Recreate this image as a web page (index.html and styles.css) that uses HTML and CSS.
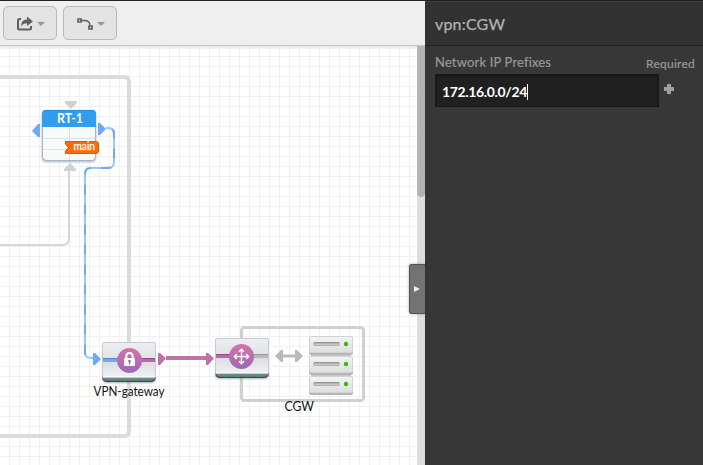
FILE: index.html
```html
<!DOCTYPE html>
<html lang="en">
<head>
<meta charset="utf-8">
<title>Network editor</title>
<link rel="stylesheet" href="styles.css">
</head>
<body>
<div class="app">
  <main class="workspace">
    <header class="toolbar">
      <button class="tool" aria-label="Export">
        <svg width="18" height="16" viewBox="0 0 18 16"><path d="M5 3H3.500Q2 3 2 4.500V12Q2 13.500 3.500 13.500H13.500Q15 13.500 15 12V10" fill="none" stroke="#606060" stroke-width="2"/><path d="M5 10.500Q5 3.500 11 3.500V0.500L17 5.500L11 10V7.200Q7.500 7 5 10.500Z" fill="#606060"/></svg>
        <span class="caret"></span>
      </button>
      <button class="tool" aria-label="Line style">
        <svg width="18" height="14" viewBox="0 0 18 14"><path d="M5 3.500H8Q14 3.500 14 8.500" fill="none" stroke="#606060" stroke-width="1.300"/><path d="M2 2h3v3h-3zM13 9h3v3h-3z" fill="none" stroke="#606060" stroke-width="1.700"/></svg>
        <span class="caret"></span>
      </button>
    </header>
    <section class="canvas">
      <svg class="diagram" width="425" height="419" viewBox="0 46 425 419">
        <defs>
          <linearGradient id="box" x2="0" y2="1"><stop offset="0" stop-color="#eceef2"/><stop offset=".6" stop-color="#dddfe3"/><stop offset="1" stop-color="#f0f1f3"/></linearGradient>
          <linearGradient id="disc" x2="0" y2="1"><stop offset="0" stop-color="#d673a8"/><stop offset="1" stop-color="#9c68b7"/></linearGradient>
          <linearGradient id="rack" x2="0" y2="1"><stop offset="0" stop-color="#f4f4f4"/><stop offset="1" stop-color="#dedede"/></linearGradient>
          <linearGradient id="base" x2="0" y2="1"><stop offset="0" stop-color="#8e9298"/><stop offset="1" stop-color="#5e646b"/></linearGradient>
          <filter id="shadow" x="-20%" y="-20%" width="140%" height="150%"><feDropShadow dx="0" dy="1" stdDeviation="1" flood-color="#667085" flood-opacity=".55"/></filter>
          <g id="gateway">
            <path d="M0 35H54V36Q53 40 49 40H5Q1 40 0 36Z" fill="url(#base)" filter="url(#shadow)"/>
            <path d="M1 37Q2 39.500 5 39.500H49Q52 39.500 53 37" fill="none" stroke="#3f464e"/>
            <path d="M8 38.500H47" stroke="#27a45f" stroke-dasharray="5 6"/>
            <rect x=".5" y=".5" width="53" height="35" rx="1.500" fill="url(#box)" stroke="#c5cad5"/>
            <path d="M1 34.500H53" stroke="#f8f8f8"/>
          </g>
          <g id="server">
            <path d="M0 14H44V17Q44 19 42 19H2Q0 19 0 17Z" fill="#b6b6b6"/>
            <rect x=".5" y=".5" width="43" height="16" rx="1.500" fill="url(#rack)" stroke="#d2d2d2"/>
            <rect x="4" y="6" width="27" height="4" rx="2" fill="#b2b2b2"/>
            <path d="M5 6.500H30" stroke="#969696"/><path d="M5 8.500H30" stroke="#c8c8c8"/>
            <circle cx="37" cy="8" r="2.200" fill="#39bd08"/>
          </g>
        </defs>
        <path d="M-5 77H124Q129 77 129 82V431Q129 436 124 436H-5" fill="none" stroke="#dbdbdb" stroke-width="4"/>
        <rect x="241.500" y="327.500" width="122" height="73" rx="3" fill="none" stroke="#d0d0d0" stroke-width="3"/>

        <path d="M0 245H62Q69 245 69 238V169" fill="none" stroke="#d6d6d5" stroke-width="2"/>
        <path d="M70 163L76 169V171H64V169Z" fill="#d1d1cf"/>
        <path d="M65 101H77V103L71 109L65 103Z" fill="#d1d1cf"/>
        <g fill="none" stroke-width="2">
          <path d="M106 128H108Q114 128 114 134V162Q114 168 108 168H91Q85 168 85 174V352Q85 358 91 358H95" stroke="#9dc7fc"/>
          <path d="M106 128H108Q114 128 114 134V162Q114 168 108 168H91Q85 168 85 174V352Q85 358 91 358H95" stroke="#6babfb" stroke-dasharray="10 10" stroke-dashoffset="13.900"/>
        </g>
        <path d="M40 124V137H38L32 131L38 124ZM98 123H100L106 129L100 135H98ZM93 353H95L101 359L95 365H93Z" fill="#69abfa"/>

        <g filter="url(#shadow)"><rect x="42" y="110" width="54" height="51" rx="4" fill="#b8c1d2"/></g>
        <rect x="42.500" y="110.500" width="53" height="50" rx="4" fill="#f8faf9" stroke="#a8b4c8"/>
        <path d="M69.500 127V160M43 138.500H95M43 149.500H95" stroke="#dfe2e4"/>
        <path d="M42 127V114Q42 110 46 110H92Q96 110 96 114V127Z" fill="#309df1"/>
        <path d="M44 111.500Q45 110.500 47 110.500H91Q93 110.500 94 111.500" fill="none" stroke="#278bd9"/>
        <text class="node-title" x="70" y="123" text-anchor="middle" textLength="26" lengthAdjust="spacingAndGlyphs">RT-1</text>
        <path d="M65.500 141.500H96Q98.500 141.500 98.500 144V151Q98.500 153.500 96 153.500H65.500V151L68.500 147.500L65.500 144Z" fill="#fd6c08" stroke="#dc5a00"/>
        <text class="tag" x="73.500" y="150.300" textLength="21.500" lengthAdjust="spacingAndGlyphs">main</text>

        <path d="M166 358H207" stroke="#bd73a3" stroke-width="4"/>
        <path d="M158 353H160L166 358.500L160 365H158ZM206 353H208L214 358.500L208 365H206Z" fill="#bd73a3"/>
        <use href="#gateway" x="102" y="342"/>
        <path d="M103 360H118" stroke="#69abfa" stroke-width="4"/><path d="M103 358.500H118" stroke="#568ad0"/>
        <path d="M141 360H155" stroke="#bb65aa" stroke-width="4"/><path d="M141 358.500H155" stroke="#934c89"/>
        <circle cx="129.500" cy="360.500" r="12.500" fill="url(#disc)"/>
        <path d="M126.300 359V356.500Q126.300 353 129.500 353Q132.700 353 132.700 356.500V359" fill="none" stroke="#fff" stroke-width="2"/>
        <rect x="124" y="358" width="11" height="8" rx="1" fill="#fff"/><circle cx="129.500" cy="361" r="1.300" fill="#a9659f"/><path d="M129.500 361V364.500" stroke="#a9659f" stroke-width="1.300"/>
        <text class="label" x="93.500" y="396" textLength="71" lengthAdjust="spacingAndGlyphs">VPN-gateway</text>

        <use href="#gateway" x="215" y="338"/>
        <path d="M216 356H230" stroke="#bb65aa" stroke-width="4"/><path d="M216 354.500H230" stroke="#934c89"/>
        <path d="M253 356H268" stroke="#b8b8ba" stroke-width="4"/><path d="M253 354.500H268" stroke="#98999b"/>
        <circle cx="241.500" cy="356.500" r="12.500" fill="url(#disc)"/>
        <path d="M241.500 350V363M235 356.500H248M239 351.800L241.500 349.300L244 351.800M239 361.200L241.500 363.700L244 361.200M236.800 354L234.300 356.500L236.800 359M246.200 354L248.700 356.500L246.200 359" fill="none" stroke="#fff" stroke-width="1.400"/>
        <path d="M275 356L281 350H283V354.500H295V350H297L303 356L297 362H295V357.500H283V362H281Z" fill="#b9b9bc"/>
        <path d="M311 353H351V377H311Z" fill="#c8c8c8"/>
        <use href="#server" x="309" y="336"/><use href="#server" x="309" y="356"/><use href="#server" x="309" y="376"/>
        <text class="label" x="284.500" y="411" textLength="29.500" lengthAdjust="spacingAndGlyphs">CGW</text>
      </svg>
      <div class="scrollbar"><div class="thumb"></div></div>
      <button class="collapse" aria-label="Collapse panel"></button>
    </section>
  </main>
  <aside class="panel">
    <h1 class="panel-title">vpn:CGW</h1>
    <div class="panel-body">
      <div class="field-head"><span class="field-name">Network IP Prefixes</span><span class="required">Required</span></div>
      <div class="field-row"><div class="input"><span class="value">172.16.0.0/24</span></div><svg class="add" width="10" height="10"><path d="M3 0h4v3h3v4h-3v3h-4v-3h-3v-4h3z" fill="#a0a0a0"/></svg></div>
    </div>
  </aside>
</div>
</body>
</html>
```
FILE: styles.css
```css
* { box-sizing: border-box; }
body { margin: 0; font-family: Lato, "Liberation Sans", sans-serif; overflow: hidden; }
.app { display: flex; width: 703px; height: 465px; border-top: 1px solid #2b1a29; }
.workspace { width: 425px; display: flex; flex-direction: column; }
.toolbar { height: 45px; padding: 5px 3px; display: flex; gap: 6px; background: #efefef; border-bottom: 1px solid #c8c8c8; }
.tool { width: 54px; height: 34px; padding: 2px 0 0; display: flex; align-items: center; justify-content: center; gap: 3px; border: 1px solid #b8b8b8; border-radius: 5px; background: #e3e3e3; }
.caret { border: 4px solid transparent; border-top-color: #989898; border-bottom: 0; }
.canvas {
  position: relative; flex: 1; display: flex; background-color: #fff;
  background-image: linear-gradient(#0000000c 0 3px, transparent 3px), linear-gradient(90deg, transparent 9px, #f1f1f1 9px), linear-gradient(#f1f1f1 1px, transparent 1px);
  background-size: 100% 3px, 10px 10px, 10px 10px;
  background-repeat: no-repeat, repeat, repeat;
}
.diagram { display: block; flex: none; }
.label { font-size: 13px; fill: #111; }
.node-title { font-size: 13px; font-weight: 700; fill: #fff; }
.tag { font-size: 10.5px; fill: #fff; stroke: #fff; stroke-width: .25px; }
.scrollbar { position: absolute; top: 0; right: 0; width: 8px; height: 100%; background: #dedede; }
.thumb { height: 151px; background: #b3b3b3; border-radius: 0 0 4px 4px; }
.collapse { position: absolute; top: 218px; right: 0; width: 16px; height: 50px; padding: 0 0 0 4px; border: 1px solid #555; border-right: 0; border-radius: 3px 0 0 3px; background: #737373; box-shadow: 0 0 3px #0005; }
.collapse::before { content: ""; display: block; width: 0; border: 3.5px solid transparent; border-left: 6px solid #eee; border-right: 0; }
.panel { width: 278px; background: #373737; border-top: 1px solid #454045; }
.panel-title { height: 44px; margin: 0; padding: 0 10px; background: #323232; border-bottom: 1px solid #202020; color: #b3b3b3; font-size: 16px; font-weight: 400; letter-spacing: .2px; line-height: 43px; -webkit-text-stroke: .25px #b3b3b3; }
.panel-body { padding: 7px 8px 0 10px; }
.field-head { display: flex; justify-content: space-between; height: 21px; color: #999; line-height: 18px; -webkit-text-stroke: .2px #999; }
.field-name { font-size: 13px; letter-spacing: .16px; }
.required { font-size: 12px; padding-top: 2px; letter-spacing: .25px; }
.field-row { display: flex; gap: 5px; }
.input { width: 224px; height: 33px; padding: 8px 6px; background: #202020; border: 1px solid #181818; box-shadow: inset 0 1px 2px #111; color: #fff; font-size: 14px; font-weight: 700; letter-spacing: -.35px; }
.value { display: inline-block; height: 16px; line-height: 15px; border-right: 1px solid #fff; }
.add { margin-top: 10px; }
```
